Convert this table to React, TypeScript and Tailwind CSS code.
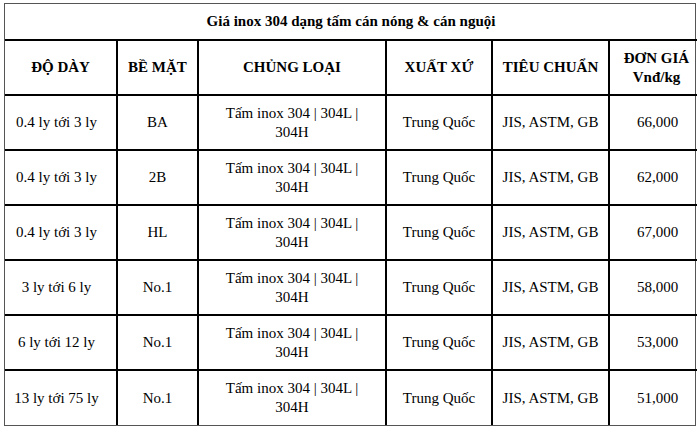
import React from 'react';

const rows = [
    { thick: '0.4 ly tới 3 ly', surface: 'BA', price: '66,000' },
    { thick: '0.4 ly tới 3 ly', surface: '2B', price: '62,000' },
    { thick: '0.4 ly tới 3 ly', surface: 'HL', price: '67,000' },
    { thick: '3 ly tới 6 ly', surface: 'No.1', price: '58,000' },
    { thick: '6 ly tới 12 ly', surface: 'No.1', price: '53,000' },
    { thick: '13 ly tới 75 ly', surface: 'No.1', price: '51,000' },
];

// padding set per cell, so it is not in the base class
const cell = 'border-2 border-black text-center align-middle';

export default function App() {
    return (
        <div className="min-h-screen bg-white pl-[4px] pt-[3px] font-['Liberation_Serif','Times_New_Roman',serif] text-[15px] leading-[19px] text-black">
            <div className="w-[692px] border border-[#555]">
                <table className="w-full table-fixed border-collapse border-hidden">
                    <colgroup>
                        <col className="w-[112px]" />
                        <col className="w-[81px]" />
                        <col className="w-[188px]" />
                        <col className="w-[106px]" />
                        <col className="w-[117px]" />
                        <col className="w-[88px]" />
                    </colgroup>
                    <thead>
                        <tr className="h-[36px]">
                            <th colSpan={6} className={`${cell} px-[10px] font-bold`}>
                                Giá inox 304 dạng tấm cán nóng &amp; cán nguội
                            </th>
                        </tr>
                        <tr className="h-[55px] font-bold">
                            <th className={`${cell} px-[4px]`}>ĐỘ DÀY</th>
                            <th className={`${cell} px-[4px]`}>BỀ MẶT</th>
                            <th className={`${cell} px-[4px]`}>CHỦNG LOẠI</th>
                            <th className={`${cell} px-[4px]`}>XUẤT XỨ</th>
                            <th className={`${cell} px-[4px]`}>TIÊU CHUẨN</th>
                            <th className={`${cell} pl-[8px] pr-[2px]`}>
                                ĐƠN GIÁ
                                <br />
                                Vnđ/kg
                            </th>
                        </tr>
                    </thead>
                    <tbody>
                        {rows.map((r, i) => (
                            <tr key={i} className="h-[55px]">
                                <td className={`${cell} pl-0 pr-[8px]`}>{r.thick}</td>
                                <td className={`${cell} px-[4px]`}>{r.surface}</td>
                                <td className={`${cell} px-[10px]`}>Tấm inox 304 | 304L | 304H</td>
                                <td className={`${cell} px-[4px]`}>Trung Quốc</td>
                                <td className={`${cell} px-[4px]`}>JIS, ASTM, GB</td>
                                <td className={`${cell} pl-[12px] pr-[4px]`}>{r.price}</td>
                            </tr>
                        ))}
                    </tbody>
                </table>
            </div>
        </div>
    );
}
